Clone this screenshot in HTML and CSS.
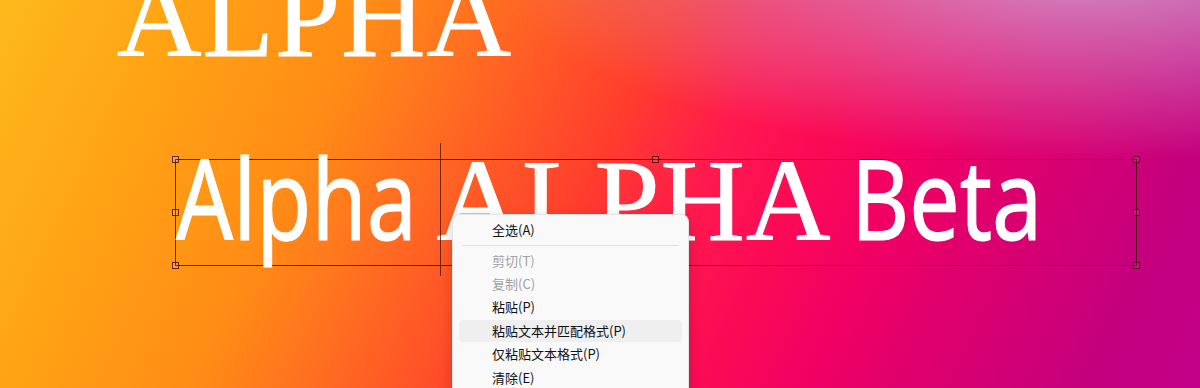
FILE: index.html
```html
<!DOCTYPE html>
<html lang="zh-CN">
<head>
<meta charset="utf-8">
<title>Text frame</title>
<link rel="stylesheet" href="styles.css">
</head>
<body>
<div class="stage">
  <h1 class="title">ALPHA</h1>
  <div class="frame">
    <p class="line"><span class="sans w-alpha">Alpha</span> <span class="serif">ALPHA</span> <span class="sans w-beta">Beta</span></p>
    <span class="handle h-tl"></span>
    <span class="handle h-tm"></span>
    <span class="handle h-tr"></span>
    <span class="handle h-ml"></span>
    <span class="handle h-mr"></span>
    <span class="handle h-bl"></span>
    <span class="handle h-bm"></span>
    <span class="handle h-br"></span>
  </div>
  <div class="caret"></div>
  <ul class="menu">
    <li class="item">全选(A)</li>
    <li class="sep"></li>
    <li class="item disabled">剪切(T)</li>
    <li class="item disabled">复制(C)</li>
    <li class="item">粘贴(P)</li>
    <li class="item hover">粘贴文本并匹配格式(P)</li>
    <li class="item">仅粘贴文本格式(P)</li>
    <li class="item">清除(E)</li>
  </ul>
</div>
</body>
</html>
```
FILE: styles.css
```css
* { box-sizing: border-box; }
html, body { margin: 0; padding: 0; }
body { width: 1200px; height: 388px; overflow: hidden; }

.stage {
  position: relative;
  width: 1200px;
  height: 388px;
  overflow: hidden;
  background:
    radial-gradient(ellipse 600px 210px at 1090px -50px, rgba(205,160,210,0.95), rgba(205,160,210,0) 100%),
    linear-gradient(115deg, #fdb91c 0%, #ffa414 13%, #ff8c16 27%, #ff7020 35%, #ff3c2e 49%, #ff1a4e 57%, #fb0a55 64%, #f00064 72%, #e0006c 78%, #c4007e 92%, #c2008a 100%);
}

.title {
  margin: -42px 0 0 0;
  padding-left: 117px;
  font-family: "Liberation Serif", serif;
  font-weight: normal;
  font-size: 117px;
  line-height: 1;
  letter-spacing: 1px;
  color: #fff;
  -webkit-text-stroke: 0.9px #fff;
}

.frame {
  position: absolute;
  left: 175px;
  top: 159px;
  width: 962px;
  height: 107px;
  border: 1px solid rgba(60, 8, 8, 0.8);
}

.line {
  margin: -15px 0 0 0;
  font-family: "Noto Sans", sans-serif;
  font-size: 112px;
  line-height: 104px;
  color: #fff;
  white-space: nowrap;
}

.sans {
  display: inline-block;
  transform: scaleX(0.8);
  transform-origin: 0 50%;
  -webkit-text-stroke: 1px #fff;
}
.w-alpha { margin-right: -70px; }
.w-beta { margin-left: -10px; }

.serif {
  font-family: "Liberation Serif", serif;
  font-size: 117px;
  letter-spacing: 1px;
  -webkit-text-stroke: 0.9px #fff;
}

.handle {
  position: absolute;
  width: 7px;
  height: 7px;
  border: 1px solid rgba(60, 8, 8, 0.8);
  background: rgba(255, 255, 255, 0.08);
}
.h-tl { left: -4px; top: -4px; }
.h-tm { left: calc(50% - 4px); top: -4px; }
.h-tr { right: -4px; top: -4px; }
.h-ml { left: -4px; top: calc(50% - 4px); }
.h-mr { right: -4px; top: calc(50% - 4px); }
.h-bl { left: -4px; bottom: -4px; }
.h-bm { left: calc(50% - 4px); bottom: -4px; }
.h-br { right: -4px; bottom: -4px; }

.caret {
  position: absolute;
  left: 440px;
  top: 143px;
  width: 1px;
  height: 133px;
  background: rgba(70, 15, 15, 0.75);
}

.menu {
  position: absolute;
  left: 452px;
  top: 214px;
  width: 237px;
  height: 200px;
  margin: 0;
  padding: 4px 6px 0 6px;
  list-style: none;
  background: #f9f9f9;
  border: 1px solid rgba(0, 0, 0, 0.08);
  border-radius: 8px;
  box-shadow: 0 4px 14px rgba(0, 0, 0, 0.18);
  font-family: "Noto Sans CJK SC", "Noto Sans", sans-serif;
  font-size: 13px;
  color: #111;
}

.item {
  height: 22px;
  margin-bottom: 1.4px;
  padding-left: 33px;
  line-height: 22px;
  border-radius: 4px;
  white-space: nowrap;
}
.item.disabled { color: #a2a2a2; }
.item.hover { background: #efefef; }

.sep {
  height: 1px;
  margin: 3.6px 3px 4px 3px;
  background: #e2e2e2;
}
```
